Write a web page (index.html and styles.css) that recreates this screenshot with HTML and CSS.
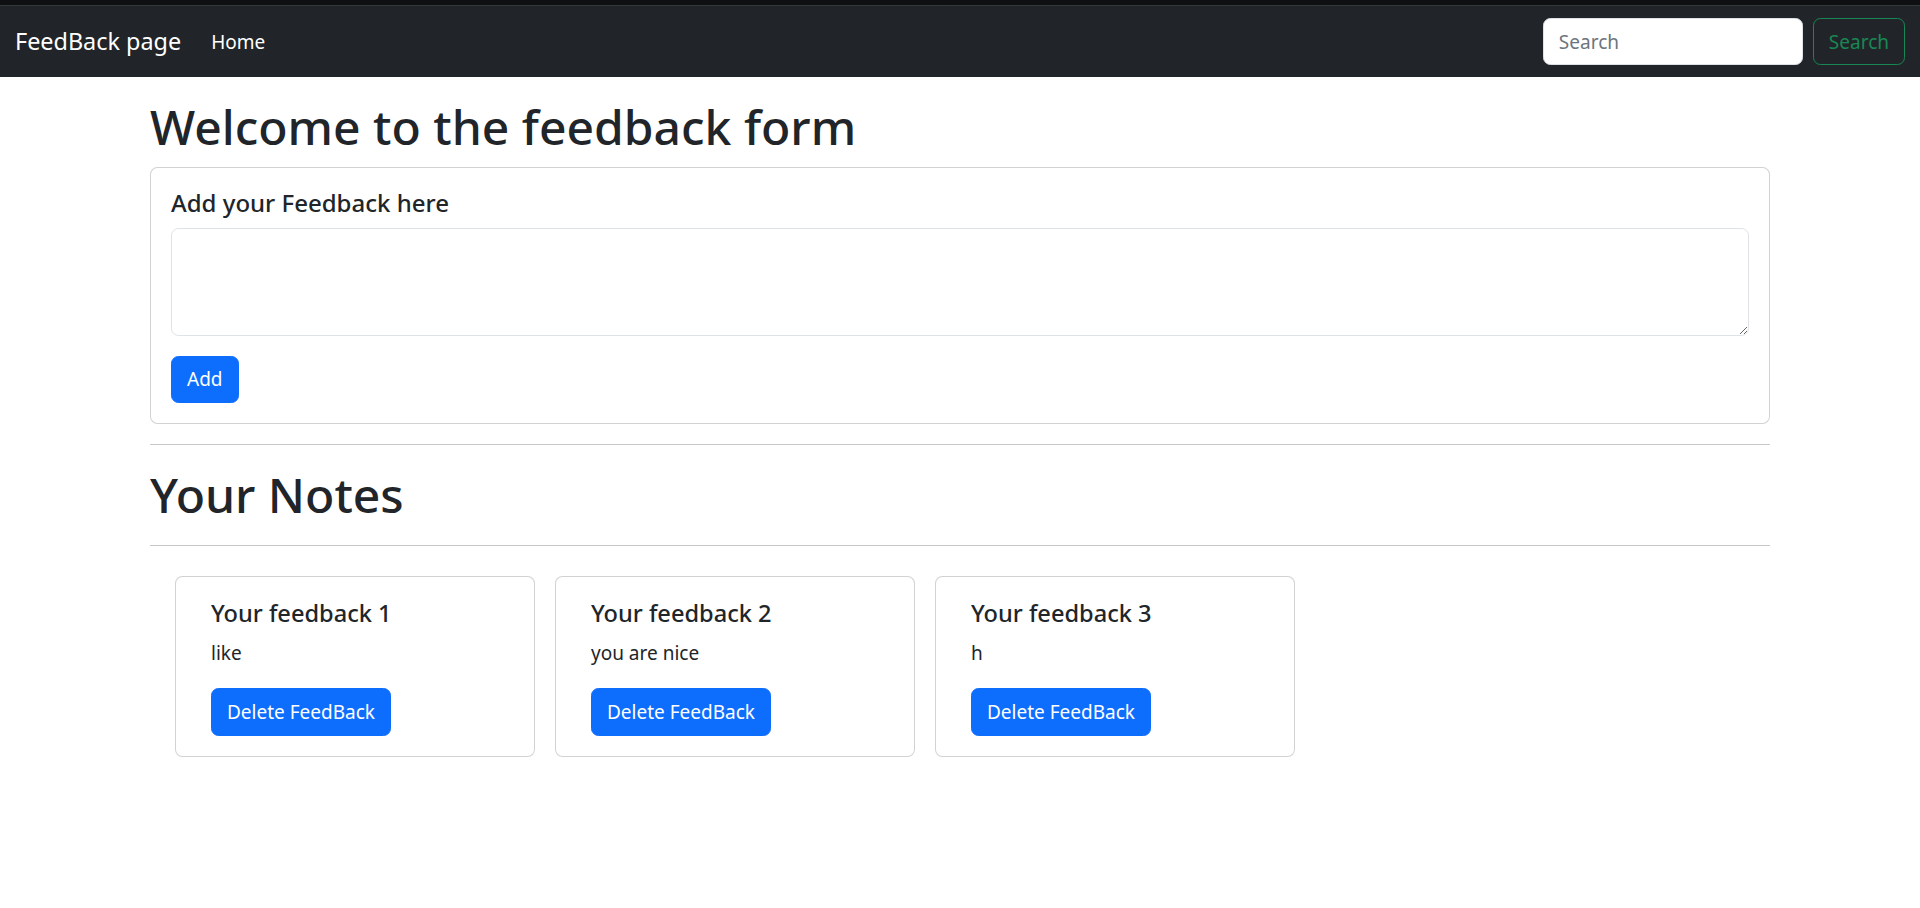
FILE: index.html
```html
<!DOCTYPE html>
<html lang="en">
<head>
<meta charset="utf-8">
<title>FeedBack page</title>
<link rel="stylesheet" href="styles.css">
</head>
<body>
<div class="topstrip"></div>
<nav class="navbar">
  <div class="nav-left">
    <a class="brand" href="#">FeedBack page</a>
    <a class="nav-link" href="#">Home</a>
  </div>
  <form class="search">
    <input class="search-input" type="search" placeholder="Search">
    <button class="btn btn-outline-success" type="button">Search</button>
  </form>
</nav>
<main class="container">
  <h1 class="heading">Welcome to the feedback form</h1>
  <div class="card">
    <div class="card-body">
      <label class="form-label">Add your Feedback here</label>
      <textarea class="form-control" rows="3"></textarea>
      <button class="btn btn-primary" type="button">Add</button>
    </div>
  </div>
  <hr class="divider">
  <h1 class="heading">Your Notes</h1>
  <hr class="divider">
  <div class="notes">
    <div class="card note">
      <div class="note-body">
        <h5 class="note-title">Your feedback 1</h5>
        <p class="note-text">like</p>
        <button class="btn btn-primary" type="button">Delete FeedBack</button>
      </div>
    </div>
    <div class="card note">
      <div class="note-body">
        <h5 class="note-title">Your feedback 2</h5>
        <p class="note-text">you are nice</p>
        <button class="btn btn-primary" type="button">Delete FeedBack</button>
      </div>
    </div>
    <div class="card note">
      <div class="note-body">
        <h5 class="note-title">Your feedback 3</h5>
        <p class="note-text">h</p>
        <button class="btn btn-primary" type="button">Delete FeedBack</button>
      </div>
    </div>
  </div>
</main>
</body>
</html>
```

FILE: styles.css
```css
* { box-sizing: border-box; }

html, body {
  margin: 0;
  padding: 0;
  background: #fff;
}

body {
  font-family: "Segoe UI", "Noto Sans", "Open Sans", sans-serif;
  font-size: 19px;
  line-height: 30px;
  color: #212529;
}

.topstrip {
  height: 6px;
  background: #0f1011;
  border-bottom: 1px solid #34373a;
}

.navbar {
  height: 71px;
  background: #212529;
  display: flex;
  align-items: center;
  justify-content: space-between;
  padding: 0 15px;
}

.nav-left {
  display: flex;
  align-items: center;
}

.brand {
  color: #fff;
  text-decoration: none;
  font-size: 23.4px;
  line-height: 37.5px;
  margin-right: 20px;
}

.nav-link {
  color: #fff;
  text-decoration: none;
  font-size: 19px;
  line-height: 30px;
  padding: 10px;
}

.search {
  display: flex;
  align-items: center;
  margin: 0;
}

.search-input {
  width: 260px;
  height: 47.5px;
  margin-right: 10px;
  padding: 7.5px 15px;
  font-family: inherit;
  font-size: 19px;
  line-height: 30px;
  color: #212529;
  background: #fff;
  border: 1px solid #dee2e6;
  border-radius: 7.5px;
  outline: none;
}

.search-input::placeholder { color: #6c757d; }

.btn {
  display: inline-block;
  height: 47.5px;
  font-family: inherit;
  font-size: 19px;
  line-height: 30px;
  padding: 7.5px 15px;
  border: 1px solid transparent;
  border-radius: 7.5px;
  cursor: pointer;
}

.btn-outline-success {
  color: #198754;
  background: transparent;
  border-color: #198754;
}

.btn-primary {
  color: #fff;
  background: #0d6efd;
  border-color: #0d6efd;
}

.container {
  width: 1650px;
  margin: 20px auto 0;
  padding: 0 15px;
}

.heading {
  margin: 0 0 10px;
  font-size: 48px;
  font-weight: 500;
  line-height: 60px;
}

.card {
  background: #fff;
  border: 1px solid rgba(0, 0, 0, 0.175);
  border-radius: 7.5px;
}

.card-body {
  padding: 20px;
  display: flex;
  flex-direction: column;
  align-items: flex-start;
}

.form-label {
  display: block;
  font-size: 24px;
  font-weight: 500;
  line-height: 30px;
  margin-bottom: 10px;
}

.form-control {
  display: block;
  width: 100%;
  height: 107.5px;
  padding: 7.5px 15px;
  font-family: inherit;
  font-size: 19px;
  line-height: 30px;
  color: #212529;
  border: 1px solid #dee2e6;
  border-radius: 7.5px;
  margin-bottom: 20px;
  outline: none;
}

.divider {
  margin: 20px 0;
  border: 0;
  border-top: 1px solid #212529;
  opacity: 0.25;
}

.notes {
  display: flex;
  gap: 20px;
  padding-left: 25px;
  margin-top: 30px;
}

.note {
  width: 360px;
}

.note-body {
  padding: 21px 35px 20px;
  display: flex;
  flex-direction: column;
  align-items: flex-start;
}

.note-title {
  margin: 0 0 10px;
  font-size: 23.6px;
  font-weight: 500;
  line-height: 30px;
}

.note-text {
  margin: 0 0 20px;
  font-size: 19px;
  line-height: 30px;
}
```
